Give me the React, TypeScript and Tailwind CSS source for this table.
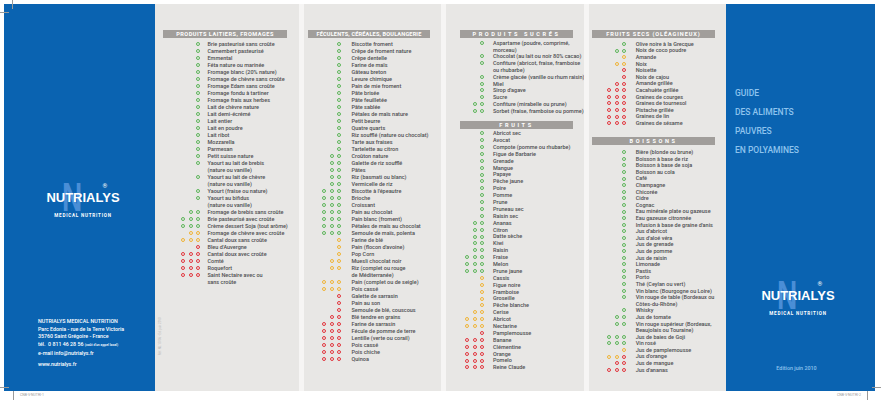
import React from 'react';

type Item = [string, string];

const dot: Record<string, string> = {
  g: 'border-[#5db55a]',
  y: 'border-[#f0b436]',
  r: 'border-[#e2363e]',
};

const laitiers: Item[] = [
  ['g', 'Brie pasteurisé sans croûte'],
  ['g', 'Camembert pasteurisé'],
  ['g', 'Emmental'],
  ['g', 'Féta nature ou marinée'],
  ['g', 'Fromage blanc (20% nature)'],
  ['g', 'Fromage de chèvre sans croûte'],
  ['g', 'Fromage Edam sans croûte'],
  ['g', 'Fromage fondu à tartiner'],
  ['g', 'Fromage frais aux herbes'],
  ['g', 'Lait de chèvre nature'],
  ['g', 'Lait demi-écrémé'],
  ['g', 'Lait entier'],
  ['g', 'Lait en poudre'],
  ['g', 'Lait ribot'],
  ['g', 'Mozzarella'],
  ['g', 'Parmesan'],
  ['g', 'Petit suisse nature'],
  ['g', 'Yaourt au lait de brebis'],
  ['', '(nature ou vanille)'],
  ['g', 'Yaourt au lait de chèvre'],
  ['', '(nature ou vanille)'],
  ['g', 'Yaourt (fraise ou nature)'],
  ['g', 'Yaourt au bifidus'],
  ['', '(nature ou vanille)'],
  ['gg', 'Fromage de brebis sans croûte'],
  ['ggg', 'Brie pasteurisé avec croûte'],
  ['ggg', 'Crème dessert Soja (tout arôme)'],
  ['yy', 'Fromage de chèvre avec croûte'],
  ['yyy', 'Cantal doux sans croûte'],
  ['r', "Bleu d'Auvergne"],
  ['rrr', 'Cantal doux avec croûte'],
  ['rrr', 'Comté'],
  ['rrr', 'Roquefort'],
  ['rrr', 'Saint Nectaire avec ou'],
  ['', 'sans croûte'],
];

const feculents: Item[] = [
  ['g', 'Biscotte froment'],
  ['g', 'Crêpe de froment nature'],
  ['g', 'Crêpe dentelle'],
  ['g', 'Farine de maïs'],
  ['g', 'Gâteau breton'],
  ['g', 'Levure chimique'],
  ['g', 'Pain de mie froment'],
  ['g', 'Pâte brisée'],
  ['g', 'Pâte feuilletée'],
  ['g', 'Pâte sablée'],
  ['g', 'Pétales de maïs nature'],
  ['g', 'Petit beurre'],
  ['g', 'Quatre quarts'],
  ['g', 'Riz soufflé (nature ou chocolat)'],
  ['g', 'Tarte aux fraises'],
  ['g', 'Tartelette au citron'],
  ['gg', 'Croûton nature'],
  ['gg', 'Galette de riz soufflé'],
  ['gg', 'Pâtes'],
  ['gg', 'Riz (basmati ou blanc)'],
  ['gg', 'Vermicelle de riz'],
  ['ggg', "Biscotte à l'épeautre"],
  ['ggg', 'Brioche'],
  ['ggg', 'Croissant'],
  ['ggg', 'Pain au chocolat'],
  ['ggg', 'Pain blanc (froment)'],
  ['ggg', 'Pétales de maïs au chocolat'],
  ['ggg', 'Semoule de maïs, polenta'],
  ['y', 'Farine de blé'],
  ['y', "Pain (flocon d'avoine)"],
  ['y', 'Pop Corn'],
  ['yy', 'Muesli chocolat noir'],
  ['yy', 'Riz (complet ou rouge'],
  ['', 'de Méditerranée)'],
  ['yyy', 'Pain (complet ou de seigle)'],
  ['yyy', 'Pois cassé'],
  ['r', 'Galette de sarrasin'],
  ['r', 'Pain au son'],
  ['r', 'Semoule de blé, couscous'],
  ['rr', 'Blé tendre en grains'],
  ['rrr', 'Farine de sarrasin'],
  ['rrr', 'Fécule de pomme de terre'],
  ['rrr', 'Lentille (verte ou corail)'],
  ['rrr', 'Pois cassé'],
  ['rrr', 'Pois chiche'],
  ['rrr', 'Quinoa'],
];

const sucres: Item[] = [
  ['g', 'Aspartame (poudre, comprimé,'],
  ['', 'morceau)'],
  ['g', 'Chocolat (au lait ou noir 80% cacao)'],
  ['g', 'Confiture (abricot, fraise, framboise'],
  ['', 'ou rhubarbe)'],
  ['g', 'Crème glacée (vanille ou rhum raisin)'],
  ['g', 'Miel'],
  ['g', "Sirop d'agave"],
  ['g', 'Sucre'],
  ['gg', 'Confiture (mirabelle ou prune)'],
  ['gg', 'Sorbet (fraise, framboise ou pomme)'],
];

const fruits: Item[] = [
  ['g', 'Abricot sec'],
  ['g', 'Avocat'],
  ['g', 'Compote (pomme ou rhubarbe)'],
  ['g', 'Figue de Barbarie'],
  ['g', 'Grenade'],
  ['g', 'Mangue'],
  ['g', 'Papaye'],
  ['g', 'Pêche jaune'],
  ['g', 'Poire'],
  ['g', 'Pomme'],
  ['g', 'Prune'],
  ['g', 'Pruneau sec'],
  ['g', 'Raisin sec'],
  ['gg', 'Ananas'],
  ['gg', 'Citron'],
  ['gg', 'Datte sèche'],
  ['gg', 'Kiwi'],
  ['gg', 'Raisin'],
  ['ggg', 'Fraise'],
  ['ggg', 'Melon'],
  ['ggg', 'Prune jaune'],
  ['y', 'Cassis'],
  ['y', 'Figue noire'],
  ['y', 'Framboise'],
  ['y', 'Groseille'],
  ['y', 'Pêche blanche'],
  ['yy', 'Cerise'],
  ['yyy', 'Abricot'],
  ['yyy', 'Nectarine'],
  ['r', 'Pamplemousse'],
  ['rrr', 'Banane'],
  ['rrr', 'Clémentine'],
  ['rrr', 'Orange'],
  ['rrr', 'Pomelo'],
  ['rrr', 'Reine Claude'],
];

const secs: Item[] = [
  ['g', 'Olive noire à la Grecque'],
  ['gg', 'Noix de coco poudre'],
  ['y', 'Amande'],
  ['yy', 'Noix'],
  ['r', 'Noisette'],
  ['r', 'Noix de cajou'],
  ['rr', 'Amande grillée'],
  ['rrr', 'Cacahuète grillée'],
  ['rrr', 'Graines de courges'],
  ['rrr', 'Graines de tournesol'],
  ['rrr', 'Pistache grillée'],
  ['rrr', 'Graines de lin'],
  ['rrr', 'Graines de sésame'],
];

const boissons: Item[] = [
  ['g', 'Bière (blonde ou brune)'],
  ['g', 'Boisson à base de riz'],
  ['g', 'Boisson à base de soja'],
  ['g', 'Boisson au cola'],
  ['g', 'Café'],
  ['g', 'Champagne'],
  ['g', 'Chicorée'],
  ['g', 'Cidre'],
  ['g', 'Cognac'],
  ['g', 'Eau minérale plate ou gazeuse'],
  ['g', 'Eau gazeuse citronnée'],
  ['g', "Infusion à base de graine d'anis"],
  ['g', "Jus d'abricot"],
  ['g', "Jus d'aloé véra"],
  ['g', 'Jus de grenade'],
  ['g', 'Jus de pomme'],
  ['g', 'Jus de raisin'],
  ['g', 'Limonade'],
  ['g', 'Pastis'],
  ['g', 'Porto'],
  ['g', 'Thé (Ceylan ou vert)'],
  ['g', 'Vin blanc (Bourgogne ou Loire)'],
  ['g', 'Vin rouge de table (Bordeaux ou'],
  ['', 'Côtes-du-Rhône)'],
  ['g', 'Whisky'],
  ['gg', 'Jus de tomate'],
  ['gg', 'Vin rouge supérieur (Bordeaux,'],
  ['', 'Beaujolais ou Touraine)'],
  ['ggg', 'Jus de baies de Goji'],
  ['ggg', 'Vin rosé'],
  ['y', 'Jus de pamplemousse'],
  ['yyr', "Jus d'orange"],
  ['rr', 'Jus de mangue'],
  ['rrr', "Jus d'ananas"],
];

function Rows({ items, ind, gap, lh }: { items: Item[]; ind: string; gap: string; lh: string }) {
  return (
    <div className="flex flex-col">
      {items.map(([code, text], i) => (
        <div key={i} className={`flex items-center ${lh}`}>
          <div className={`${ind} flex justify-end gap-[3.4px] shrink-0`}>
            {code.split('').map((c, j) => (
              <span key={j} className={`w-[4px] h-[4px] rounded-full border-[1.1px] ${dot[c]}`} />
            ))}
          </div>
          <span className={`${gap} whitespace-nowrap text-[5.5px] font-medium text-[#4f4f52]`}>{text}</span>
        </div>
      ))}
    </div>
  );
}

function Header({ label, className }: { label: string; className: string }) {
  return (
    <div
      className={`h-[8px] bg-[#a19e9b] flex items-center justify-center text-white font-bold text-[5.6px] uppercase whitespace-nowrap ${className}`}
    >
      {label}
    </div>
  );
}

function Logo() {
  return (
    <div className="flex flex-col items-center">
      <div className="relative">
        <span className="absolute left-[16px] top-[-8.5px] text-[#4a8ed6] font-bold text-[40px] leading-[29px] scale-x-[0.7] origin-left font-['Liberation_Sans',sans-serif]">
          N
        </span>
        <span className="absolute left-[56px] top-[-8px] text-white text-[6px] leading-[6px]">®</span>
        <div className="relative text-white font-bold text-[13px] leading-[13px] font-['Liberation_Sans',sans-serif]">
          NUTRIALYS
        </div>
      </div>
      <div className="mt-[9px] text-white font-bold text-[4.6px] leading-[6px] tracking-[0.75px]">MEDICAL NUTRITION</div>
    </div>
  );
}

export default function App() {
  return (
    <div className="relative w-[881px] h-[400px] bg-white overflow-hidden font-['Roboto','Liberation_Sans',sans-serif]">
      <div className="flex pt-[4px] pl-[4px] h-[391px]">
        {/* left cover */}
        <div className="w-[151px] bg-[#0a63b1] flex flex-col pt-[187px]">
          <div className="pl-[7px]">
            <Logo />
          </div>
          <div className="mt-[99px] pl-[34px] text-white text-[5.3px] font-medium leading-[7.7px] whitespace-nowrap">
            <div>NUTRIALYS MEDICAL NUTRITION</div>
            <div>Parc Edonia - rue de la Terre Victoria</div>
            <div>35760 Saint Grégoire - France</div>
            <div>
              tél.&nbsp; 0 811 46 28 56 <span className="text-[3.4px]">(coût d'un appel local)</span>
            </div>
            <div>e-mail info@nutrialys.fr</div>
            <div className="mt-[3.5px]">www.nutrialys.fr</div>
          </div>
        </div>

        {/* col 1 */}
        <div className="relative w-[144px] bg-[#e8e7e5] pt-[26px]">
          <Header label="Produits laitiers, fromages" className="ml-[8px] w-[124px] tracking-[0.5px]" />
          <div className="mt-[2.5px]">
            <Rows items={laitiers} ind="w-[45px]" gap="ml-[7.5px]" lh="h-[7px]" />
          </div>
          <span className="absolute left-[-14px] top-[330px] -rotate-90 text-[3px] text-[#b8b6b4] whitespace-nowrap">
            Réf. NL 10/06 - Ed. juin 2010
          </span>
        </div>
        <div className="w-[5px] bg-[#f6f5f4]" />

        {/* col 2 */}
        <div className="w-[137px] bg-[#e8e7e5] pt-[26px]">
          <Header label="Féculents, céréales, boulangerie" className="ml-[4px] w-[122px] tracking-[0.15px]" />
          <div className="mt-[2.5px]">
            <Rows items={feculents} ind="w-[37px]" gap="ml-[10.5px]" lh="h-[7px]" />
          </div>
        </div>
        <div className="w-[5px] bg-[#f6f5f4]" />

        {/* col 3 */}
        <div className="w-[138px] bg-[#e8e7e5] pt-[26px]">
          <Header label="Produits sucrés" className="ml-[14px] w-[113px] tracking-[2.6px]" />
          <div className="mt-[1.5px]">
            <Rows items={sucres} ind="w-[38px]" gap="ml-[9px]" lh="h-[6.8px]" />
          </div>
          <Header label="Fruits" className="mt-[7px] ml-[14px] w-[113px] tracking-[2.6px]" />
          <div className="mt-[0.5px]">
            <Rows items={fruits} ind="w-[38px]" gap="ml-[9px]" lh="h-[6.9px]" />
          </div>
        </div>
        <div className="w-[5px] bg-[#f6f5f4]" />

        {/* col 4 */}
        <div className="w-[137px] bg-[#e8e7e5] pt-[26px]">
          <Header label="Fruits secs (oléagineux)" className="ml-[3px] w-[123px] tracking-[0.9px]" />
          <div className="mt-[2.7px]">
            <Rows items={secs} ind="w-[37px]" gap="ml-[9.7px]" lh="h-[6.6px]" />
          </div>
          <Header label="Boissons" className="mt-[11px] ml-[3px] w-[123px] tracking-[2.6px]" />
          <div className="mt-[3.5px]">
            <Rows items={boissons} ind="w-[37px]" gap="ml-[9.7px]" lh="h-[6.6px]" />
          </div>
        </div>

        {/* right cover */}
        <div className="w-[149px] bg-[#0a63b1] flex flex-col pt-[80px]">
          <div className="pl-[9px] text-[#8ec3ee] font-medium text-[8.5px] leading-[19px] whitespace-nowrap">
            <div>GUIDE</div>
            <div>DES ALIMENTS</div>
            <div>PAUVRES</div>
            <div>EN POLYAMINES</div>
          </div>
          <div className="mt-[129px] pr-[5px]">
            <Logo />
          </div>
          <div className="mt-[48px] pr-[8px] text-center text-[#8ec3ee] text-[5.4px] font-medium leading-[7px]">
            Edition juin 2010
          </div>
        </div>
      </div>

      {/* crop marks */}
      <div className="absolute left-0 top-[12px] w-[9px] h-px bg-[#9a9a9a]" />
      <div className="absolute left-[12px] top-0 w-px h-[9px] bg-[#9a9a9a]" />
      <div className="absolute left-0 top-[387px] w-[9px] h-px bg-[#9a9a9a]" />
      <div className="absolute left-[13px] top-[391px] w-px h-[9px] bg-[#9a9a9a]" />
      <div className="absolute left-[20px] top-[393px] text-[3.5px] text-[#9a9a9a]">CNB-V-NUTRI-1</div>
      <div className="absolute right-0 top-[387px] w-[9px] h-px bg-[#9a9a9a]" />
      <div className="absolute right-[13px] top-[391px] w-px h-[9px] bg-[#9a9a9a]" />
      <div className="absolute right-[20px] top-[393px] text-[3.5px] text-[#9a9a9a]">CNB-V-NUTRI-2</div>
    </div>
  );
}
